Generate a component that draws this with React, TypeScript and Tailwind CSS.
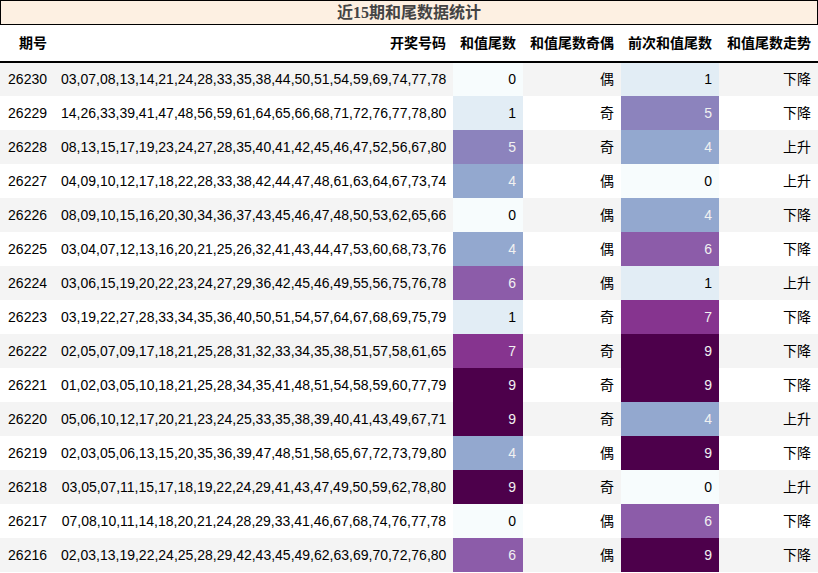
import React from 'react';

const rows: [string, string, number, string, number, string][] = [
  ['26230', '03,07,08,13,14,21,24,28,33,35,38,44,50,51,54,59,69,74,77,78', 0, '偶', 1, '下降'],
  ['26229', '14,26,33,39,41,47,48,56,59,61,64,65,66,68,71,72,76,77,78,80', 1, '奇', 5, '下降'],
  ['26228', '08,13,15,17,19,23,24,27,28,35,40,41,42,45,46,47,52,56,67,80', 5, '奇', 4, '上升'],
  ['26227', '04,09,10,12,17,18,22,28,33,38,42,44,47,48,61,63,64,67,73,74', 4, '偶', 0, '上升'],
  ['26226', '08,09,10,15,16,20,30,34,36,37,43,45,46,47,48,50,53,62,65,66', 0, '偶', 4, '下降'],
  ['26225', '03,04,07,12,13,16,20,21,25,26,32,41,43,44,47,53,60,68,73,76', 4, '偶', 6, '下降'],
  ['26224', '03,06,15,19,20,22,23,24,27,29,36,42,45,46,49,55,56,75,76,78', 6, '偶', 1, '上升'],
  ['26223', '03,19,22,27,28,33,34,35,36,40,50,51,54,57,64,67,68,69,75,79', 1, '奇', 7, '下降'],
  ['26222', '02,05,07,09,17,18,21,25,28,31,32,33,34,35,38,51,57,58,61,65', 7, '奇', 9, '下降'],
  ['26221', '01,02,03,05,10,18,21,25,28,34,35,41,48,51,54,58,59,60,77,79', 9, '奇', 9, '下降'],
  ['26220', '05,06,10,12,17,20,21,23,24,25,33,35,38,39,40,41,43,49,67,71', 9, '奇', 4, '上升'],
  ['26219', '02,03,05,06,13,15,20,35,36,39,47,48,51,58,65,67,72,73,79,80', 4, '偶', 9, '下降'],
  ['26218', '03,05,07,11,15,17,18,19,22,24,29,41,43,47,49,50,59,62,78,80', 9, '奇', 0, '上升'],
  ['26217', '07,08,10,11,14,18,20,21,24,28,29,33,41,46,67,68,74,76,77,78', 0, '偶', 6, '下降'],
  ['26216', '02,03,13,19,22,24,25,28,29,42,43,45,49,62,63,69,70,72,76,80', 6, '偶', 9, '下降'],
];

// BuPu gradient, 0..9
const cellClass: Record<number, string> = {
  0: 'bg-[#f7fcfd] text-black',
  1: 'bg-[#e2edf5] text-black',
  4: 'bg-[#93a8cf] text-[#f1f1f1]',
  5: 'bg-[#8c83bd] text-[#f1f1f1]',
  6: 'bg-[#8c5ca9] text-[#f1f1f1]',
  7: 'bg-[#86348f] text-[#f1f1f1]',
  9: 'bg-[#4d004b] text-[#f1f1f1]',
};

const App = () => {
  return (
    <div className="w-[818px] bg-white text-[14px] text-black font-['Liberation_Sans','Noto_Sans_CJK_SC',sans-serif]">
      <div className="h-[25px] border border-black bg-[#fdf0e2] text-center text-[16px] leading-[23px] font-bold text-[#444] font-['Liberation_Serif','Noto_Sans_CJK_SC',serif]">
        近15期和尾数据统计
      </div>
      <table className="w-[818px] table-fixed border-collapse">
        <colgroup>
          <col className="w-[54px]" />
          <col className="w-[399px]" />
          <col className="w-[70px]" />
          <col className="w-[98px]" />
          <col className="w-[98px]" />
          <col className="w-[99px]" />
        </colgroup>
        <thead>
          <tr className="h-[37px] border-b-2 border-black font-bold">
            {['期号', '开奖号码', '和值尾数', '和值尾数奇偶', '前次和值尾数', '和值尾数走势'].map(h => (
              <th key={h} className="px-[7px] text-right font-bold whitespace-nowrap">{h}</th>
            ))}
          </tr>
        </thead>
        <tbody>
          {rows.map((r, i) => (
            <tr key={r[0]} className={`h-[34px] ${i % 2 === 0 ? 'bg-[#f4f4f4]' : 'bg-white'}`}>
              <td className="px-[7px] text-right">{r[0]}</td>
              <td className="px-[7px] text-right whitespace-nowrap">{r[1]}</td>
              <td className={`px-[7px] text-right ${cellClass[r[2]]}`}>{r[2]}</td>
              <td className="px-[7px] text-right">{r[3]}</td>
              <td className={`px-[7px] text-right ${cellClass[r[4]]}`}>{r[4]}</td>
              <td className="px-[7px] text-right">{r[5]}</td>
            </tr>
          ))}
        </tbody>
      </table>
    </div>
  );
};

export default App;
